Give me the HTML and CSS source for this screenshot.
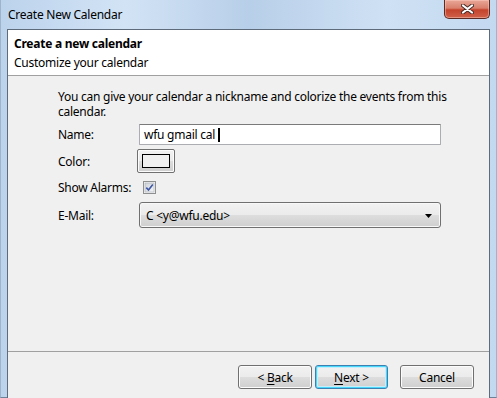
FILE: index.html
```html
<!DOCTYPE html>
<html lang="en">
<head>
    <meta charset="UTF-8">
    <title>Create New Calendar</title>
    <link rel="stylesheet" href="styles.css">
</head>
<body>
    <div class="window">
        <div class="titlebar">
            <span class="title">Create New Calendar</span>
            <div class="close-btn">
                <svg width="13" height="10" viewBox="0 0 13 10">
                    <path d="M2 1.5 L11 8.5 M11 1.5 L2 8.5" stroke="#4a2a24" stroke-width="4" stroke-linecap="round"/>
                    <path d="M2 1.5 L11 8.5 M11 1.5 L2 8.5" stroke="#ffffff" stroke-width="2.2" stroke-linecap="round"/>
                </svg>
            </div>
        </div>
        <div class="client">
            <div class="header">
                <div class="header-title">Create a new calendar</div>
                <div class="header-sub">Customize your calendar</div>
            </div>
            <div class="content">
                <p class="desc">You can give your calendar a nickname and colorize the events from this calendar.</p>
                <div class="form">
                    <label class="lbl">Name:</label>
                    <div class="textbox">wfu gmail cal<span class="caret"></span></div>

                    <label class="lbl">Color:</label>
                    <div><div class="color-btn"><span class="swatch"></span></div></div>

                    <label class="lbl">Show Alarms:</label>
                    <div>
                        <svg class="checkbox" width="13" height="13" viewBox="0 0 13 13">
                            <defs>
                                <linearGradient id="cb" x1="0" y1="0" x2="1" y2="1">
                                    <stop offset="0" stop-color="#cfd3d8"/>
                                    <stop offset="1" stop-color="#f4f5f6"/>
                                </linearGradient>
                            </defs>
                            <rect x="0.5" y="0.5" width="12" height="12" fill="#f4f4f4" stroke="#8e8f8f"/>
                            <rect x="2" y="2" width="9" height="9" fill="url(#cb)" stroke="#a9b0b8" stroke-width="0.6"/>
                            <path d="M3.3 6.6 L5.5 9 L9.8 3.4" fill="none" stroke="#3d57a6" stroke-width="1.6"/>
                        </svg>
                    </div>

                    <label class="lbl">E-Mail:</label>
                    <div class="dropdown">
                        <span>C &lt;y@wfu.edu&gt;</span>
                        <svg width="7" height="4" viewBox="0 0 7 4"><path d="M0 0 H7 L3.5 4 Z" fill="#000"/></svg>
                    </div>
                </div>
            </div>
            <div class="buttons">
                <div class="btn"><span>&lt; <u>B</u>ack</span></div>
                <div class="btn btn-default"><span><u>N</u>ext &gt;</span></div>
                <div class="btn btn-cancel"><span>Cancel</span></div>
            </div>
        </div>
    </div>
</body>
</html>
```

FILE: styles.css
```css
html, body {
    margin: 0;
    padding: 0;
}
body {
    width: 497px;
    height: 398px;
    overflow: hidden;
    font-family: "Noto Sans", "Open Sans", sans-serif;
    font-size: 12px;
    letter-spacing: -0.25px;
    color: #000;
}
.window {
    height: 398px;
    box-sizing: border-box;
    display: flex;
    flex-direction: column;
    background: linear-gradient(to right, #bcd3ec 0%, #d2e3f5 25%, #b8cfe9 50%, #cfe1f4 78%, #c3d9f0 100%);
    border-left: 1px solid #9fb4cc;
    border-right: 1px solid #9fb4cc;
    border-bottom: 1px solid #6f8197;
}
.titlebar {
    height: 29px;
    display: flex;
    justify-content: space-between;
    align-items: flex-start;
    flex-shrink: 0;
}
.title {
    padding-left: 7px;
    line-height: 29px;
}
.close-btn {
    width: 46px;
    height: 19px;
    margin-right: 6px;
    box-sizing: border-box;
    border: 1px solid #5c2a22;
    border-top: none;
    border-radius: 0 0 5px 5px;
    background: linear-gradient(to bottom, #e8a797 0%, #d9806d 45%, #c4432c 55%, #d0614a 100%);
    box-shadow: inset 0 0 0 1px rgba(255, 210, 200, 0.45);
    display: flex;
    align-items: center;
    justify-content: center;
}
.client {
    margin: 0 6px;
    border: 1px solid #5d6b7b;
    background: #f0f0f0;
    display: flex;
    flex-direction: column;
    flex-shrink: 0;
}
.header {
    height: 46px;
    background: #fff;
    border-bottom: 1px solid #a0a0a0;
    padding: 4px 0 0 6px;
    box-sizing: border-box;
}
.header-title {
    font-weight: bold;
    line-height: 19px;
}
.header-sub {
    line-height: 19px;
}
.content {
    height: 262px;
    border-bottom: 1px solid #a0a0a0;
    padding: 13px 0 0 50px;
    box-sizing: content-box;
}
.desc {
    margin: 0 0 5px 0;
    width: 400px;
    line-height: 15px;
}
.form {
    display: grid;
    grid-template-columns: 81px 302px;
    grid-template-rows: 21px 24px 21px 26px;
    row-gap: 4px;
    align-items: center;
}
.lbl {
    line-height: 15px;
}
.textbox {
    height: 21px;
    box-sizing: border-box;
    background: #fff;
    border: 1px solid #abadb3;
    border-top-color: #7a7a7a;
    border-radius: 1px;
    padding-left: 4px;
    line-height: 18px;
    display: flex;
    align-items: center;
}
.caret {
    display: inline-block;
    width: 2px;
    height: 14px;
    background: #000;
    margin-left: 3px;
}
.color-btn {
    width: 38px;
    height: 24px;
    margin-left: -2px;
    box-sizing: border-box;
    border: 1px solid #707070;
    border-radius: 2px;
    background: linear-gradient(to bottom, #f2f2f2 0%, #ebebeb 50%, #dddddd 51%, #cfcfcf 100%);
    box-shadow: inset 0 0 0 1px #fcfcfc;
    display: flex;
    align-items: center;
    justify-content: center;
}
.swatch {
    width: 28px;
    height: 14px;
    box-sizing: border-box;
    border: 1px solid #000;
    background: #f0f0f0;
}
.checkbox {
    display: block;
    margin-left: 4px;
}
.dropdown {
    height: 26px;
    box-sizing: border-box;
    border: 1px solid #707070;
    border-radius: 3px;
    background: linear-gradient(to bottom, #f2f2f2 0%, #ebebeb 50%, #dddddd 51%, #cfcfcf 100%);
    box-shadow: inset 0 0 0 1px #f8f8f8;
    display: flex;
    align-items: center;
    justify-content: space-between;
    padding: 0 8px 0 6px;
}
.dropdown svg {
    display: block;
    margin-top: 1px;
}
.buttons {
    height: 50px;
    display: flex;
    justify-content: flex-end;
    align-items: flex-start;
    padding: 13px 15px 0 0;
    box-sizing: border-box;
}
.btn {
    width: 74px;
    height: 24px;
    box-sizing: border-box;
    border: 1px solid #707070;
    border-radius: 3px;
    background: linear-gradient(to bottom, #f2f2f2 0%, #ebebeb 50%, #dddddd 51%, #cfcfcf 100%);
    box-shadow: inset 0 0 0 1px #fcfcfc;
    display: flex;
    align-items: center;
    justify-content: center;
    margin-left: 3px;
}
.btn u {
    text-decoration: underline;
    text-underline-offset: 2px;
}
.btn-default {
    width: 73px;
    border-color: #3c7fb1;
    box-shadow: inset 0 0 0 1px #48d8fb, inset 0 0 0 2px #c7ecfa;
}
.btn-cancel {
    margin-left: 12px;
}
```
